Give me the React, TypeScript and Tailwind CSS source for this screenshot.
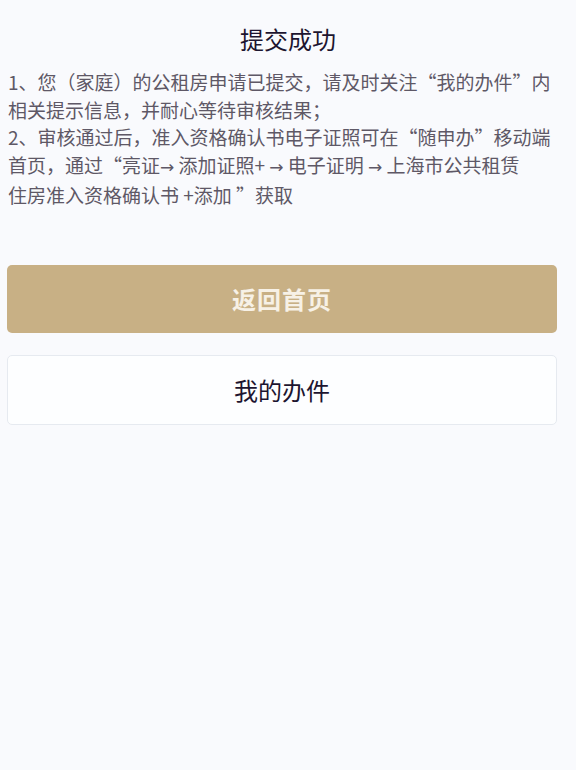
const Arrow = () => (
  <span style={{ fontFamily: '"DejaVu Sans", sans-serif' }} className="text-[17px]">
    →
  </span>
);

export default function App() {
  const font = {
    fontFamily: '"Noto Sans CJK SC", "Noto Sans", sans-serif',
  };
  return (
    <div
      className="min-h-[770px] w-[576px] bg-[#f9fafd] px-[7px] pt-[22px]"
      style={font}
    >
      <h1 className="text-center text-[24px] leading-[34px] text-[#1d1530] font-normal">
        提交成功
      </h1>
      <div className="mt-[12px] pl-[1px] text-[19px] leading-[27.5px] text-[#5e5866] whitespace-nowrap">
        <div>1、您（家庭）的公租房申请已提交，请及时关注“我的办件”内</div>
        <div>相关提示信息，并耐心等待审核结果；</div>
        <div>2、审核通过后，准入资格确认书电子证照可在“随申办”移动端</div>
        <div>
          首页，通过“亮证<Arrow /> 添加证照+ <Arrow /> 电子证明 <Arrow /> 上海市公共租赁
        </div>
        <div>住房准入资格确认书 +添加 ”获取</div>
      </div>
      <div className="mt-[56px] flex flex-col gap-[22px] pr-[12px]">
        <button className="h-[68px] w-full rounded-[5px] bg-[#c8b085] text-[24px] font-bold text-[#f7f1e6] tracking-[1px]">
          返回首页
        </button>
        <button className="h-[70px] w-full rounded-[5px] border border-[#e6eaf0] bg-[#fdfeff] text-[24px] text-[#1d1530]">
          我的办件
        </button>
      </div>
    </div>
  );
}
